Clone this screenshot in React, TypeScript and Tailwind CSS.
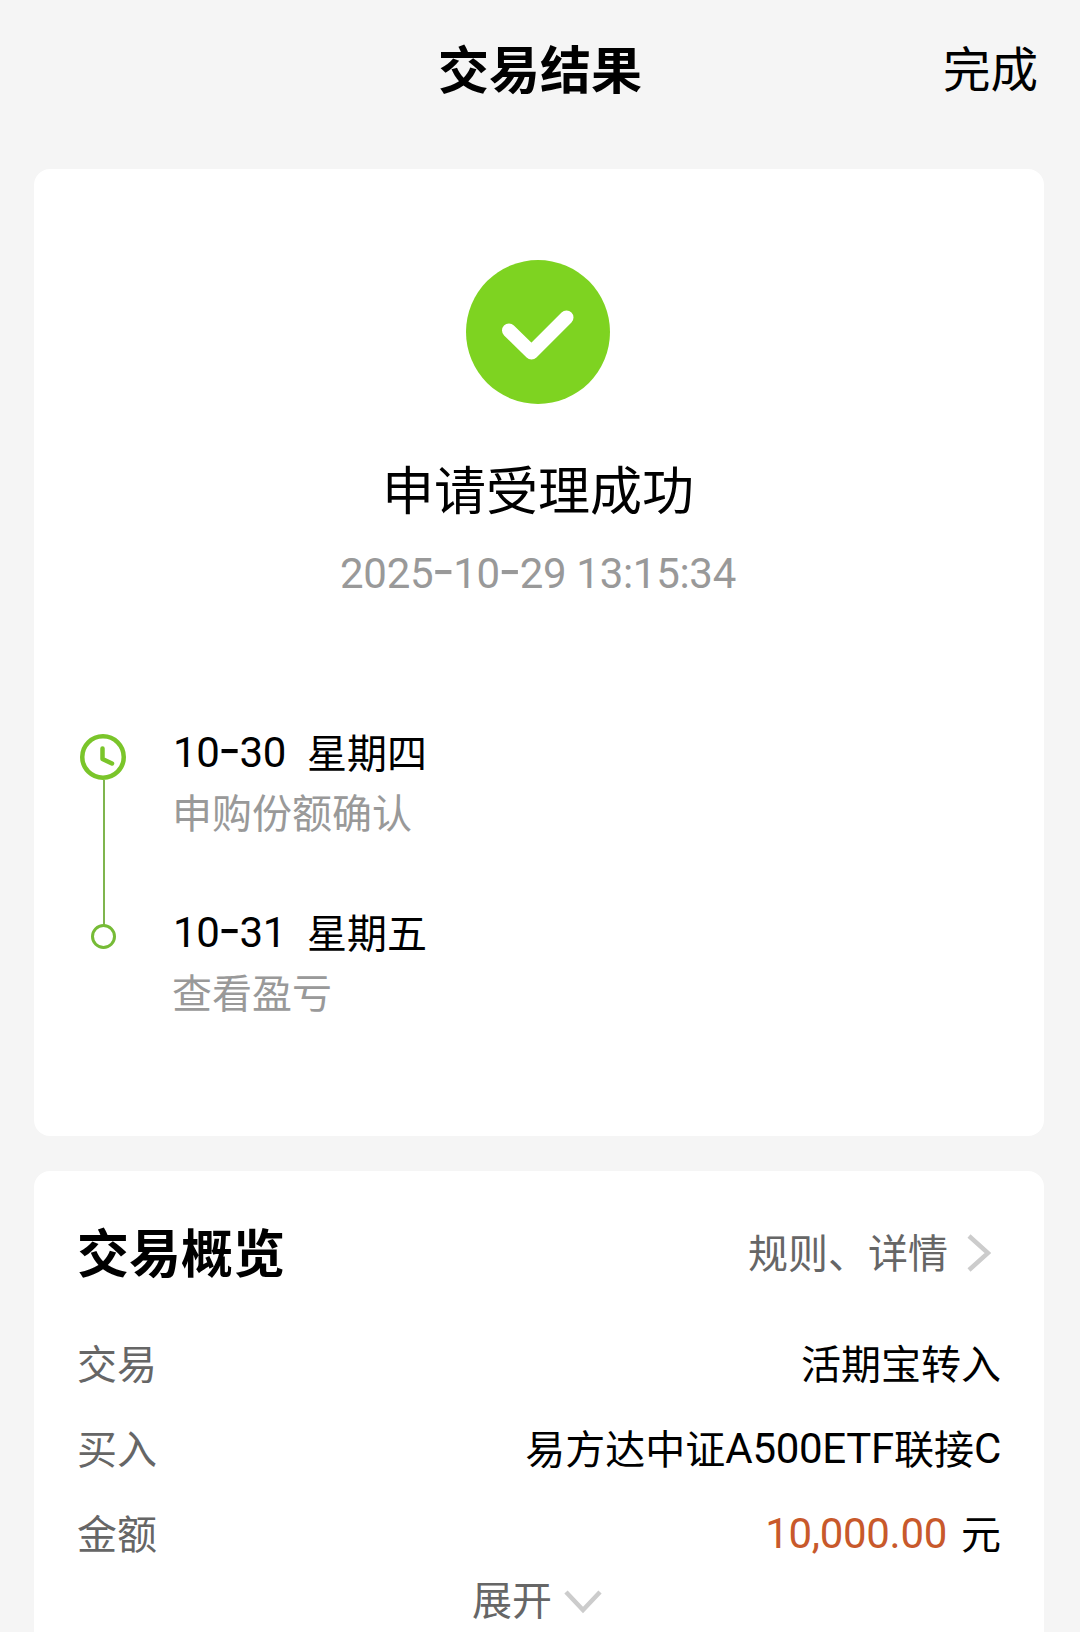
import React from 'react';

type Step = {
    date: string;
    weekday: string;
    label: string;
};

const steps: Step[] = [
    { date: '10-30', weekday: '星期四', label: '申购份额确认' },
    { date: '10-31', weekday: '星期五', label: '查看盈亏' },
];

// Latin digits sit in their own face, hyphens use a wider one
const Digits: React.FC<{ text: string; className?: string }> = ({ text, className }) => (
    <span className={`relative -top-px font-['Roboto','Noto_Sans_CJK_SC',sans-serif] leading-none tracking-[-0.3px] ${className ?? ''}`}>
        {text.split(/(-)/).map((part, i) =>
            part === '-' ? (
                <span key={i} className="-mx-[1.5px] font-['Inter',sans-serif] text-[1.2em] leading-none">-</span>
            ) : (
                part
            )
        )}
    </span>
);

const SuccessIcon = () => (
    <svg className="w-36 h-36" viewBox="0 0 144 144" fill="none">
        <circle cx="72" cy="72" r="72" fill="#7ed321" />
        <path d="M43 70.5 L65.5 92.5 L100.5 57.5" stroke="#fff" strokeWidth="14" strokeLinecap="round" strokeLinejoin="round" />
    </svg>
);

const ClockIcon = () => (
    <svg className="w-[46px] h-[46px] shrink-0" viewBox="0 0 46 46" fill="none" stroke="#7ac52a" strokeWidth="4.5">
        <circle cx="23" cy="23" r="20.75" />
        <path d="M22.5 14.5 V25 L32 29.5" strokeLinecap="round" strokeLinejoin="round" />
    </svg>
);

const DotIcon = () => (
    <svg className="w-[25px] h-[25px] shrink-0" viewBox="0 0 25 25" fill="none" stroke="#76bb36" strokeWidth="3">
        <circle cx="12.5" cy="12.5" r="11" />
    </svg>
);

const Row: React.FC<{ label: string; children: React.ReactNode }> = ({ label, children }) => (
    <div className="flex h-[85px] items-center justify-between text-[40px]">
        <span className="-ml-px text-[#666]">{label}</span>
        <span className="text-black">{children}</span>
    </div>
);

export default function App() {
    return (
        <div className="h-[1632px] w-[1080px] overflow-hidden bg-[#f5f5f5] font-['Noto_Sans_CJK_SC',sans-serif] text-black">
            <header className="grid h-[169px] grid-cols-3 items-start px-[42px] pt-[31px]">
                <span />
                <h1 className="text-center text-[51px] font-bold leading-[72px]">交易结果</h1>
                <button className="text-right text-[47.5px] leading-[72px]">完成</button>
            </header>

            <main className="flex flex-col gap-[35px] pl-[34px] pr-9">
                <section className="flex h-[967px] flex-col rounded-2xl bg-white pt-[91px]">
                    <div className="flex flex-col items-center pr-[2px]">
                        <SuccessIcon />
                        <h2 className="mt-[48px] text-[52px] leading-[72px]">申请受理成功</h2>
                        <p className="mt-[23px] flex h-12 items-center text-[#999]">
                            <Digits text="2025-10-29 13:15:34" className="text-[42px]" />
                        </p>
                    </div>

                    <div className="mt-[126px] flex pl-[46px]">
                        <div className="flex w-[46px] flex-col items-center pt-[13px]">
                            <ClockIcon />
                            <div className="-mb-px ml-[2px] h-[145px] w-[2px] bg-[#7fb54d]" />
                            <DotIcon />
                        </div>
                        <ul className="ml-[46px]">
                            {steps.map((step) => (
                                <li key={step.date} className="h-[180px] text-[40px] leading-[60px]">
                                    <div className="flex items-baseline">
                                        <Digits text={step.date} className="w-[135px] pl-px text-[42px]" />
                                        <span>{step.weekday}</span>
                                    </div>
                                    <p className="text-[#999]">{step.label}</p>
                                </li>
                            ))}
                        </ul>
                    </div>
                </section>

                <section className="h-[480px] rounded-t-2xl bg-white pl-11 pr-[43px] pt-[38px]">
                    <div className="flex h-[84px] items-center justify-between">
                        <h2 className="-ml-px text-[52px] font-bold leading-[72px]">交易概览</h2>
                        <button className="flex items-center pr-[10px] text-[40px] text-[#666]">
                            规则、详情
                            <svg className="ml-[19px] mt-1 h-10 w-6" viewBox="0 0 24 40" fill="none" stroke="#ccc" strokeWidth="4.5">
                                <path d="M2 3 L21 20 L2 37" />
                            </svg>
                        </button>
                    </div>

                    <div className="mt-[26px]">
                        <Row label="交易">活期宝转入</Row>
                        <Row label="买入">
                            易方达中证
                            <Digits text="A500ETF" className="text-[42px]" />
                            联接
                            <Digits text="C" className="text-[42px]" />
                        </Row>
                        <Row label="金额">
                            <Digits text="10,000.00" className="mr-3.5 text-[42px] text-[#c8592b]" />
                            元
                        </Row>
                    </div>

                    <button className="flex h-12 w-full items-center justify-center pr-[5px] text-[40px] text-[#666]">
                        展开
                        <svg className="ml-3 mt-2 h-6 w-[38px]" viewBox="0 0 38 24" fill="none" stroke="#ccc" strokeWidth="4.5">
                            <path d="M2 2 L19 20 L36 2" />
                        </svg>
                    </button>
                </section>
            </main>
        </div>
    );
}
